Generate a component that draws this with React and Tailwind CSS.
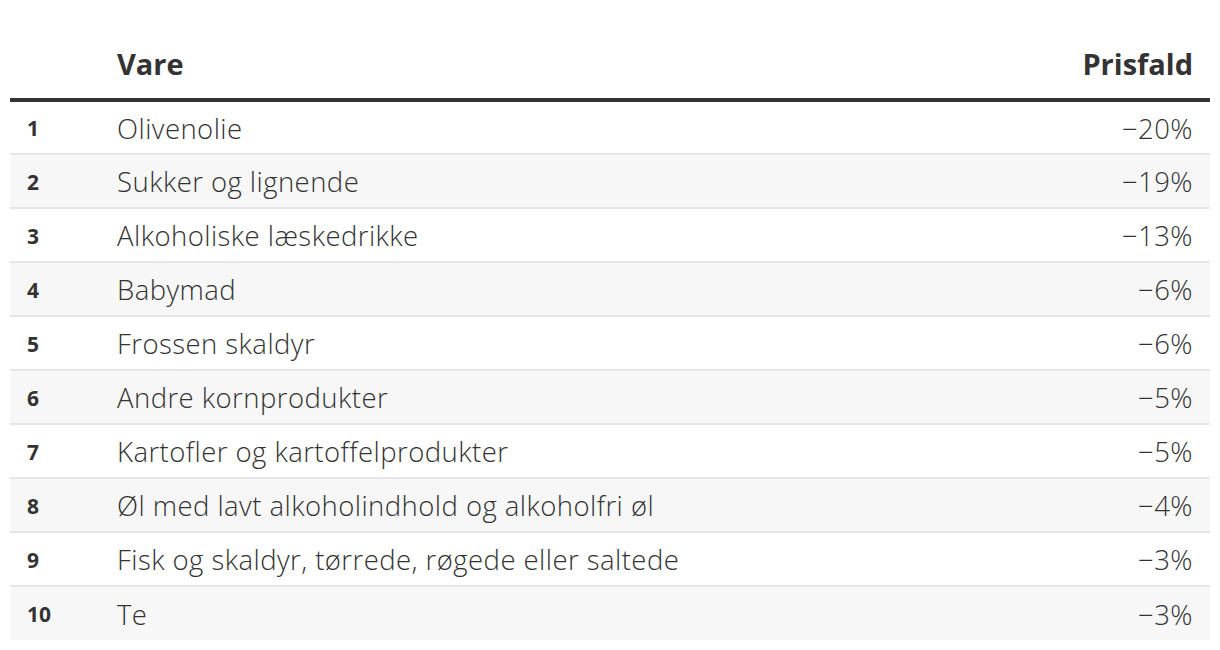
const rows = [
  ["Olivenolie", "−20%"],
  ["Sukker og lignende", "−19%"],
  ["Alkoholiske læskedrikke", "−13%"],
  ["Babymad", "−6%"],
  ["Frossen skaldyr", "−6%"],
  ["Andre kornprodukter", "−5%"],
  ["Kartofler og kartoffelprodukter", "−5%"],
  ["Øl med lavt alkoholindhold og alkoholfri øl", "−4%"],
  ["Fisk og skaldyr, tørrede, røgede eller saltede", "−3%"],
  ["Te", "−3%"],
];

export default function App() {
  return (
    <div className="min-h-[650px] w-full bg-white px-[10px] pt-[40px] font-['Open_Sans',sans-serif] text-[#333]">
      <table className="w-full border-collapse">
        <thead>
          <tr className="border-b-4 border-[#333]">
            <th className="w-[107px] p-0" />
            <th className="h-[60px] p-0 pb-[20px] text-left align-bottom text-[29px] font-bold leading-none">
              Vare
            </th>
            <th className="p-0 pb-[20px] pr-[17px] text-right align-bottom text-[29px] font-bold leading-none">
              Prisfald
            </th>
          </tr>
        </thead>
        <tbody>
          {rows.map(([name, pct], i) => (
            <tr
              key={name}
              className={`h-[54px] ${i < rows.length - 1 ? "border-b-2 border-[#e6e6e6]" : ""} ${
                i % 2 === 1 ? "bg-[#f7f7f7]" : "bg-white"
              }`}
            >
              <td className="p-0 pl-[17px] pt-[3px] text-[21px] font-bold">{i + 1}</td>
              <td className="p-0 pt-[2px] text-[27.5px] font-light tracking-[0.45px]">{name}</td>
              <td className="p-0 pt-[2px] pr-[17px] text-right text-[27.5px] font-light tracking-[0.45px]">
                {pct}
              </td>
            </tr>
          ))}
        </tbody>
      </table>
    </div>
  );
}
